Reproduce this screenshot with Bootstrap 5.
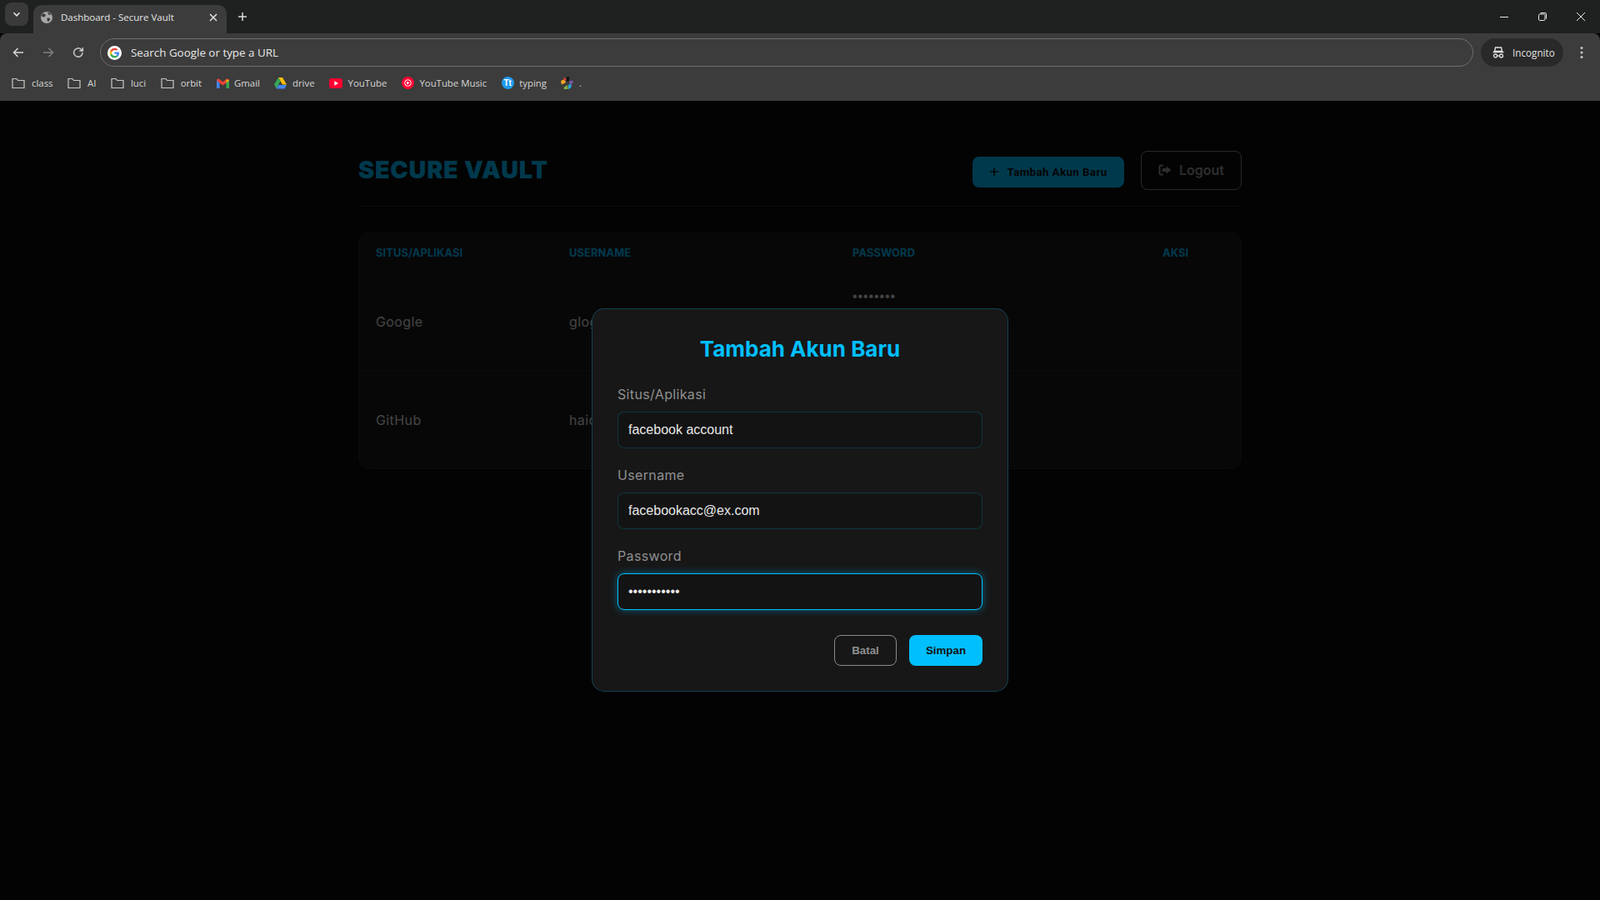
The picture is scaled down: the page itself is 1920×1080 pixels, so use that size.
<!DOCTYPE html>
<html lang="en">
<head>
    <meta charset="UTF-8">
    <title>Dashboard - Secure Vault</title>
    <link href="https://cdn.jsdelivr.net/npm/bootstrap@5.3.0/dist/css/bootstrap.min.css" rel="stylesheet">
    <style>
        html, body { height: 100%; }
        body { background: #000; font-family: "Inter", "Liberation Sans", sans-serif; overflow: hidden; }

        /* browser chrome */
        .win-frame { height: 100vh; }
        .tab-strip { height: 40px; background: #1f2120; padding-left: 6px; color: #e6e6e6; }
        .tab-search { width: 28px; height: 28px; margin-top: -6px; border-radius: 8px; background: #3a3a3a; }
        .tab-item { width: 232px; height: 34px; margin-left: 6px; margin-top: 6px; padding: 0 11px 5px 9px; background: #3c3c3c; border-radius: 10px 10px 0 0; font: 11.5px "Open Sans", sans-serif; }
        .tab-fav { margin-right: 10px; }
        .tab-add { margin-left: 13px; }
        .win-controls { margin-left: auto; gap: 34px; padding-right: 17px; }
        .toolbar { height: 81px; background: #3c3c3c; border-radius: 8px 8px 0 0; }
        .nav-line { height: 46px; padding: 6px 20px 6px 14px; }
        .nav-btns { gap: 20px; width: 92px; margin-right: 14px; }
        .omnibox { flex: 1; height: 34px; border: 1px solid #6e6e6e; border-radius: 17px; padding: 0 8px; color: #e8e8e8; font: 13.4px "Open Sans", sans-serif; gap: 11px; }
        .incog-pill { width: 99px; height: 34px; margin-left: 9px; border-radius: 17px; background: #292929; color: #e0e0e0; font: 11.7px "Open Sans", sans-serif; padding-left: 13px; gap: 9px; }
        .kebab { margin-left: 20px; }
        .bookmark-line { height: 35px; padding: 0 0 8px 14px; gap: 17.500px; color: #d6d6d6; font: 11.400px "Open Sans", sans-serif; }
        .bm { gap: 8px; }
        .bm-fav { gap: 6.500px; }
        .bm-tt { width: 15px; height: 15px; border-radius: 50%; background: #1e9bf0; color: #fff; font: 700 10px "Liberation Sans", sans-serif; }

        /* page */
        .page-view { flex: 1; background: #0a0a0a; min-height: 0; }
        .vault-wrap { width: 1060px; margin: 0 auto; }
        .vault-head { height: 127px; padding-top: 60px; padding-bottom: 20px; border-bottom: 1px solid rgba(0, 191, 255, .2); }
        .vault-title { font-size: 28.8px; font-weight: 900; letter-spacing: .75px; color: #00bfff; margin: 0; }
        .btn-add { width: 182px; height: 37px; margin-right: 20px; margin-top: 4px; padding: 0; gap: 9px; border: 0; border-radius: 8px; background: #00bfff; color: #121212; font: 700 13.33px "Roboto", sans-serif; letter-spacing: .4px; }
        .btn-out { width: 121px; height: 47px; padding: 0; gap: 9px; border: 1px solid #8a8a8a; border-radius: 8px; background: transparent; color: #999; font-size: 16px; font-weight: 600; }
        .vault-card { margin-top: 30px; background: #1a1a1a; border: 1px solid rgba(0, 191, 255, .12); border-radius: 15px; overflow: hidden; }
        .vault-table { table-layout: fixed; margin: 0; --bs-table-bg: transparent; --bs-table-color: #e0e0e0; }
        .vault-table th { height: 47px; padding: 2px 20px 0; border: 0; color: #00bfff; font-size: 12.8px; font-weight: 700; letter-spacing: .15px; vertical-align: middle; }
        .vault-table td { height: 118px; padding: 2px 20px 0; font-size: 16px; letter-spacing: .4px; vertical-align: middle; border-bottom: 1px solid rgba(255, 255, 255, .08); }
        .vault-table tr:last-child td { border-bottom: 0; }
        .vault-table td.pass-cell { vertical-align: top; padding-top: 20px; font: 16px/20px "Liberation Sans", sans-serif; letter-spacing: .9px; }
        .col-site { width: 232px; }
        .col-user { width: 340px; }
        .col-pass { width: 372px; }

        /* modal */
        .dim-layer { position: absolute; inset: 0; background: rgba(0, 0, 0, .7); }
        .add-dialog { width: 500px; height: 460px; padding: 30px; margin-top: -1px; background: #171717; border: 1px solid rgba(0, 191, 255, .25); border-radius: 15px; }
        .dialog-title { height: 35px; padding-top: 1px; margin-bottom: 25px; color: #00bfff; font-size: 26px; line-height: 34px; font-weight: 700; text-align: center; }
        .field-wrap { margin-bottom: 20px; }
        .field-label { display: block; margin-bottom: 9px; color: #909090; font-size: 16px; line-height: 24px; letter-spacing: .35px; }
        .field-input { height: 44px; padding: 0 12px; background: #131313; border: 1px solid rgba(0, 191, 255, .2); border-radius: 8px; color: #e8e8e8; font: 16px "Liberation Sans", sans-serif; }
        .field-glow { border-color: #00bfff; box-shadow: 0 0 10px rgba(0, 191, 255, .45); }
        .dialog-actions { margin-top: 30px; gap: 15px; }
        .btn-batal { width: 75px; height: 37px; padding: 0; border: 1px solid #8a8a8a; border-radius: 8px; background: transparent; color: #8f8f8f; font: 700 13.33px "Liberation Sans", sans-serif; }
        .btn-simpan { width: 88px; height: 37px; padding: 0; border: 0; border-radius: 8px; background: #00bfff; color: #121212; font: 700 13.33px "Liberation Sans", sans-serif; }
    </style>
</head>
<body>
<div class="win-frame d-flex flex-column">

    <div class="tab-strip d-flex align-items-center">
        <div class="tab-search d-flex align-items-center justify-content-center">
            <svg width="10" height="10" viewBox="0 0 10 10"><path d="M1.500 3.200 5 6.800l3.500-3.600" fill="none" stroke="#e6e6e6" stroke-width="1.500"/></svg>
        </div>
        <div class="tab-item d-flex align-items-center">
            <svg width="14" height="14" viewBox="0 0 14 14" class="tab-fav"><circle cx="7" cy="7" r="7" fill="#a8a8a8"/><path d="M3 2.200c1.500.2 2.600.9 2.800 2 .2 1-1 1.400-1.600 2-.5.6-1.300.3-2-.3L.8 5C1 3.900 2 2.800 3 2.200zM8 7.500c1.200-.2 3 .3 3.200 1.200.1 1-1 2.300-2.200 3-.8.400-1.300-.4-1.200-1.300 0-.8-.900-1.500-.3-2.200.1-.3.300-.6.500-.7zM8.500.8c1.500.3 3 1.500 3.800 3-.8.300-2 .200-2.800-.2-.8-.5-1.400-1.500-1-2.800z" fill="#3c3c3c"/></svg>
            <span>Dashboard - Secure Vault</span>
            <svg width="10" height="10" viewBox="0 0 10 10" class="ms-auto"><path d="M1 1l8 8M9 1 1 9" stroke="#e6e6e6" stroke-width="1.500"/></svg>
        </div>
        <svg class="tab-add" width="12" height="12" viewBox="0 0 12 12"><path d="M6 1v10M1 6h10" stroke="#dcdcdc" stroke-width="1.500"/></svg>
        <div class="win-controls d-flex align-items-center">
            <svg width="12" height="12" viewBox="0 0 12 12"><path d="M1 6.500h10" stroke="#e8e8e8"/></svg>
            <svg width="12" height="12" viewBox="0 0 12 12"><rect x="1.500" y="3" width="7.500" height="7.500" rx="1.300" fill="none" stroke="#e8e8e8"/><path d="M3.500 1.500h5.500a1.500 1.500 0 0 1 1.500 1.500v5.500" fill="none" stroke="#e8e8e8"/></svg>
            <svg width="12" height="12" viewBox="0 0 12 12"><path d="M1 1l10 10M11 1 1 11" stroke="#e8e8e8"/></svg>
        </div>
    </div>

    <div class="toolbar">
        <div class="nav-line d-flex align-items-center">
            <div class="nav-btns d-flex align-items-center">
                <svg width="16" height="16" viewBox="0 0 16 16"><path d="M14 8H3M7.500 3 2.500 8l5 5" fill="none" stroke="#d8d8d8" stroke-width="1.500"/></svg>
                <svg width="16" height="16" viewBox="0 0 16 16"><path d="M2 8h11M8.500 3l5 5-5 5" fill="none" stroke="#808080" stroke-width="1.500"/></svg>
                <svg width="16" height="16" viewBox="0 0 16 16"><path d="M13 8a5.200 5.200 0 1 1-1.500-3.600L13 5.800M13.300 2v4h-4" fill="none" stroke="#c8c8c8" stroke-width="1.500"/></svg>
            </div>
            <div class="omnibox d-flex align-items-center">
                <svg width="17" height="17" viewBox="0 0 48 48"><circle cx="24" cy="24" r="24" fill="#fff"/><g transform="translate(7.500 7.500) scale(.6875)"><path fill="#EA4335" d="M24 9.500c3.500 0 6.700 1.200 9.200 3.600l6.900-6.900C35.900 2.400 30.500 0 24 0 14.600 0 6.500 5.400 2.600 13.200l8 6.200C12.400 13.700 17.700 9.500 24 9.500z"/><path fill="#4285F4" d="M46.900 24.500c0-1.600-.100-3.100-.400-4.500H24v9h12.900c-.600 3-2.200 5.500-4.700 7.200l7.700 6c4.500-4.200 7-10.300 7-17.700z"/><path fill="#FBBC05" d="M10.500 28.600c-.500-1.400-.800-3-.800-4.600s.300-3.200.800-4.600l-8-6.200C.900 16.500 0 20.100 0 24s.900 7.500 2.600 10.800l7.900-6.200z"/><path fill="#34A853" d="M24 48c6.500 0 11.900-2.100 15.900-5.800l-7.700-6c-2.200 1.500-5 2.300-8.200 2.300-6.300 0-11.600-4.200-13.500-9.900l-8 6.200C6.500 42.600 14.600 48 24 48z"/></g></svg>
                <span>Search Google or type a URL</span>
            </div>
            <div class="incog-pill d-flex align-items-center">
                <svg width="16" height="16" viewBox="0 0 16 16"><path d="M4.500 2h7l1 4.500h-9zM1.500 7.500h13" fill="none" stroke="#e0e0e0" stroke-width="1.400"/><circle cx="4.500" cy="12" r="2" fill="none" stroke="#e0e0e0" stroke-width="1.300"/><circle cx="11.500" cy="12" r="2" fill="none" stroke="#e0e0e0" stroke-width="1.300"/><path d="M6.500 12h3" stroke="#e0e0e0" stroke-width="1.300"/></svg>
                <span>Incognito</span>
            </div>
            <svg class="kebab" width="4" height="16" viewBox="0 0 4 16"><circle cx="2" cy="2.500" r="1.500" fill="#c8c8c8"/><circle cx="2" cy="8" r="1.500" fill="#c8c8c8"/><circle cx="2" cy="13.500" r="1.500" fill="#c8c8c8"/></svg>
        </div>
        <div class="bookmark-line d-flex align-items-center">
            <div class="bm d-flex align-items-center"><svg width="16" height="14" viewBox="0 0 16 14"><path d="M1 12.500v-11h5l1.500 2h7.500v9z" fill="none" stroke="#c8c8c8" stroke-width="1.200"/></svg><span>class</span></div>
            <div class="bm d-flex align-items-center"><svg width="16" height="14" viewBox="0 0 16 14"><path d="M1 12.500v-11h5l1.500 2h7.500v9z" fill="none" stroke="#c8c8c8" stroke-width="1.200"/></svg><span>AI</span></div>
            <div class="bm d-flex align-items-center"><svg width="16" height="14" viewBox="0 0 16 14"><path d="M1 12.500v-11h5l1.500 2h7.500v9z" fill="none" stroke="#c8c8c8" stroke-width="1.200"/></svg><span>luci</span></div>
            <div class="bm d-flex align-items-center"><svg width="16" height="14" viewBox="0 0 16 14"><path d="M1 12.500v-11h5l1.500 2h7.500v9z" fill="none" stroke="#c8c8c8" stroke-width="1.200"/></svg><span>orbit</span></div>
            <div class="bm bm-fav d-flex align-items-center"><svg width="15" height="12" viewBox="0 0 15 12"><path d="M0 2v9a1 1 0 0 0 1 1h2.500V5.500z" fill="#4285f4"/><path d="M15 2v9a1 1 0 0 1-1 1h-2.500V5.500z" fill="#34a853"/><path d="M0 2.500C0 .5 2 0 3 .8l4.500 3.500L12 .8c1-.8 3-.3 3 1.700L11.500 5.500 7.500 8.500 3.500 5.500z" fill="#ea4335"/><path d="M11.500 1.200 15 2.500l-3.500 3z" fill="#fbbc05"/></svg><span>Gmail</span></div>
            <div class="bm bm-fav d-flex align-items-center"><svg width="15" height="14" viewBox="0 0 15 14"><path d="M5 0h5l5 8.500h-5z" fill="#fbbc05"/><path d="M5 0 0 8.500 2.500 13l5-8.500z" fill="#34a853"/><path d="M5 9h10l-2.500 4.500h-10z" fill="#4285f4"/></svg><span>drive</span></div>
            <div class="bm bm-fav d-flex align-items-center"><svg width="16" height="12" viewBox="0 0 16 12"><rect width="16" height="12" rx="3" fill="#ff0033"/><path d="M6.300 3.300v5.400L11 6z" fill="#fff"/></svg><span>YouTube</span></div>
            <div class="bm bm-fav d-flex align-items-center"><svg width="15" height="15" viewBox="0 0 15 15"><circle cx="7.500" cy="7.500" r="7.500" fill="#ff0033"/><circle cx="7.500" cy="7.500" r="3.800" fill="none" stroke="#fff"/><path d="M6.200 5.500v4l3.300-2z" fill="#fff"/></svg><span>YouTube Music</span></div>
            <div class="bm bm-fav d-flex align-items-center"><span class="bm-tt d-flex align-items-center justify-content-center">Tt</span><span>typing</span></div>
            <div class="bm bm-fav d-flex align-items-center"><svg width="15" height="15" viewBox="0 0 15 15"><path d="M7 0h3v5l-3 1z" fill="#111"/><path d="M10 5.500l4-1 1 3-4 2z" fill="#7a5aa8"/><path d="M9 9.500h4l-1 4-3 1.500z" fill="#29a8e0"/><path d="M8 10l.5 5H4l-.5-2z" fill="#7cb342"/><path d="M0 5l4-1.500L6 7 1 9.500z" fill="#f5a623"/><path d="M3 1l3 1v3L3.500 4z" fill="#e53935"/></svg><span>.</span></div>
        </div>
    </div>

    <div class="page-view position-relative">
        <div class="vault-wrap">
            <div class="vault-head d-flex align-items-center justify-content-between">
                <h1 class="vault-title">SECURE VAULT</h1>
                <div class="d-flex align-items-center">
                    <button type="button" class="btn btn-add d-flex align-items-center justify-content-center">
                        <svg width="12" height="12" viewBox="0 0 12 12"><path d="M6 1v10M1 6h10" stroke="#121212" stroke-width="1.500"/></svg>
                        Tambah Akun Baru
                    </button>
                    <button type="button" class="btn btn-out d-flex align-items-center justify-content-center">
                        <svg width="16" height="14" viewBox="0 0 16 14"><path d="M6 1.500H3a1.500 1.500 0 0 0-1.500 1.500v8A1.500 1.500 0 0 0 3 12.500h3" fill="none" stroke="#999" stroke-width="2"/><path d="M9.500 2.500 15.500 7l-6 4.500V9H5V5h4.500z" fill="#999"/></svg>
                        Logout
                    </button>
                </div>
            </div>
            <div class="vault-card">
                <table class="table vault-table">
                    <thead>
                        <tr>
                            <th class="col-site">SITUS/APLIKASI</th>
                            <th class="col-user">USERNAME</th>
                            <th class="col-pass">PASSWORD</th>
                            <th>AKSI</th>
                        </tr>
                    </thead>
                    <tbody>
                        <tr><td>Google</td><td>glogin@gmail.com</td><td class="pass-cell">••••••••</td><td></td></tr>
                        <tr><td>GitHub</td><td>haidev</td><td class="pass-cell">••••••••</td><td></td></tr>
                    </tbody>
                </table>
            </div>
        </div>

        <div class="dim-layer d-flex align-items-center justify-content-center">
            <div class="add-dialog">
                <h3 class="dialog-title">Tambah Akun Baru</h3>
                <div class="field-wrap">
                    <label class="field-label" for="fSite">Situs/Aplikasi</label>
                    <input id="fSite" type="text" class="form-control field-input" value="facebook account">
                </div>
                <div class="field-wrap">
                    <label class="field-label" for="fUser">Username</label>
                    <input id="fUser" type="text" class="form-control field-input" value="facebookacc@ex.com">
                </div>
                <div>
                    <label class="field-label" for="fPass">Password</label>
                    <input id="fPass" type="password" class="form-control field-input field-glow" value="secret12345">
                </div>
                <div class="dialog-actions d-flex justify-content-end">
                    <button type="button" class="btn btn-batal">Batal</button>
                    <button type="button" class="btn btn-simpan">Simpan</button>
                </div>
            </div>
        </div>
    </div>
</div>
<script src="https://cdn.jsdelivr.net/npm/bootstrap@5.3.0/dist/js/bootstrap.bundle.min.js"></script>
</body>
</html>
